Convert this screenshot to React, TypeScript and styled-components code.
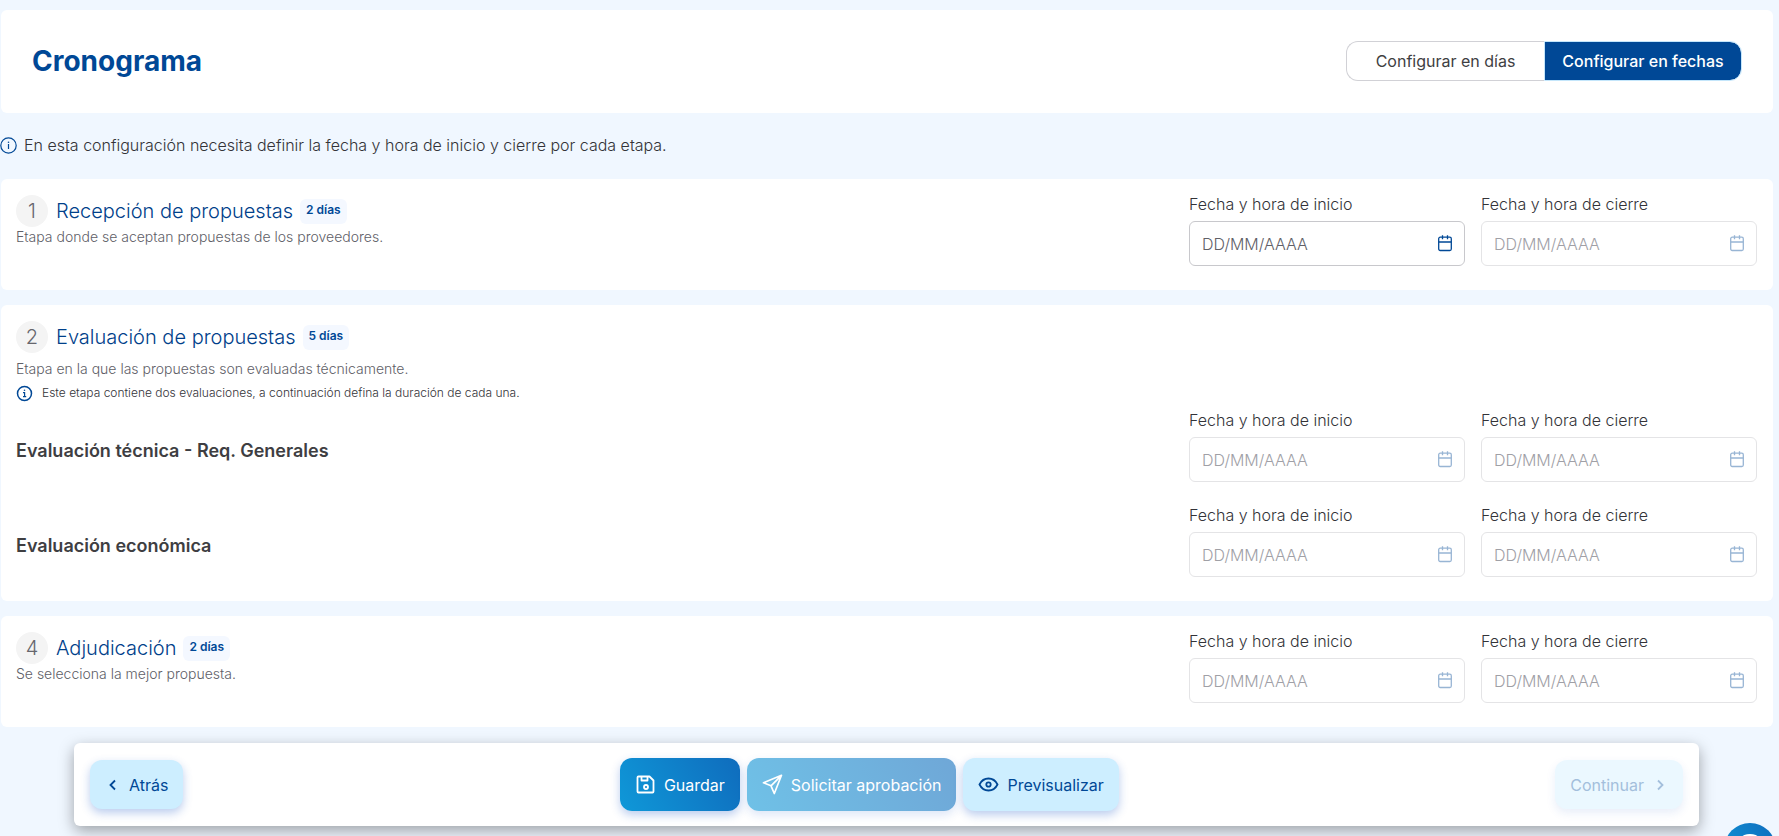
import React, { useId, useState } from 'react';
import styled, { createGlobalStyle, css } from 'styled-components';

const GlobalStyle = createGlobalStyle`
  * { box-sizing: border-box; }
  body {
    margin: 0;
    background: #f0f7ff;
    color: #333338;
    font-family: Inter, 'Liberation Sans', sans-serif;
    font-size: 16px;
    line-height: 24px;
    overflow-x: hidden;
  }
  button, input { font: inherit; }
  h1, h2, h3, p { margin: 0; }
`;

const Page = styled.main`
  height: 100vh;
  overflow: hidden;
  padding: 10px 6px 0 1px;
`;

const Header = styled.header`
  display: flex;
  align-items: center;
  justify-content: space-between;
  padding: 31px 31px 32px;
  background: #fff;
  border-radius: 6px;
`;

const Title = styled.h1`
  color: #004896;
  font-size: 28px;
  line-height: 40px;
  font-weight: 700;
`;

const Toggle = styled.div`
  display: flex;
`;

const ToggleButton = styled.button<{ $active?: boolean }>`
  width: 198px;
  height: 40px;
  padding: 0;
  border: 1px solid ${p => (p.$active ? '#c4e6fb' : '#d1d1d6')};
  background: ${p => (p.$active ? '#004896' : '#fff')};
  background-clip: padding-box;
  color: ${p => (p.$active ? '#fff' : '#3e3e42')};
  font-weight: ${p => (p.$active ? 500 : 400)};
  cursor: pointer;
  &:first-child { border-radius: 12px 0 0 12px; border-right: 0; }
  &:last-child { border-radius: 0 12px 12px 0; }
`;

const Notice = styled.p`
  display: flex;
  align-items: center;
  gap: 7px;
  margin: 20px 0 22px -1px;
  font-weight: 300;
  svg { color: #004896; }
`;

const Card = styled.section`
  display: flex;
  flex-direction: column;
  padding: 16px 16px 16px 15px;
  margin-bottom: 15px;
  background: #fff;
  border-radius: 6px;
`;

const StageRow = styled.div`
  display: flex;
  justify-content: space-between;
  height: 79px;
`;

const StageHead = styled.div`
  display: flex;
  align-items: center;
`;

const StageNumber = styled.span`
  width: 32px;
  height: 32px;
  margin-right: 8px;
  border-radius: 50%;
  background: #f4f4f4;
  color: #66666d;
  font-size: 20px;
  line-height: 32px;
  font-weight: 300;
  text-align: center;
`;

const StageTitle = styled.h2`
  color: #00408a;
  font-size: 20px;
  line-height: 32px;
  font-weight: 300;
`;

const Badge = styled.span`
  margin-left: 7px;
  padding: 0 6px 3px;
  border-radius: 6px;
  background: #f4f8ff;
  color: #004896;
  font-size: 12px;
  line-height: 22px;
  font-weight: 600;
`;

const Description = styled.p<{ $spaced?: boolean }>`
  margin-top: ${p => (p.$spaced ? 6 : 0)}px;
  color: #606067;
  font-size: 14px;
  line-height: 20px;
  font-weight: 300;
`;

const Hint = styled.p`
  display: flex;
  align-items: center;
  gap: 9px;
  margin: 4px 0 8px;
  font-size: 12px;
  line-height: 20px;
  font-weight: 300;
  svg { color: #004896; }
`;

const Evaluation = styled.div`
  display: flex;
  justify-content: space-between;
  align-items: flex-start;
  height: 95px;
  &:last-child { height: 79px; }
`;

const EvaluationTitle = styled.h3`
  margin-top: 28px;
  color: #3e3e42;
  font-size: 18px;
  line-height: 24px;
  font-weight: 600;
`;

const Fields = styled.div`
  display: flex;
  gap: 16px;
`;

const Field = styled.div`
  width: 276px;
`;

const FieldLabel = styled.label`
  display: block;
  margin: -3px 0 5px;
  font-weight: 300;
`;

const InputBox = styled.div<{ $disabled?: boolean }>`
  display: flex;
  align-items: center;
  height: 45px;
  padding: 0 12px;
  border: 1px solid #c8c8cc;
  border-radius: 6px;
  background: #fff;
  ${p => p.$disabled && css`
    border-color: #e4e4e6;
    svg { opacity: 0.4; }
  `}
  svg { color: #004896; flex: none; }
`;

const DateInput = styled.input`
  flex: 1;
  min-width: 0;
  padding: 0;
  border: 0;
  outline: 0;
  background: none;
  color: #3e3e42;
  font-weight: 300;
  &::placeholder { color: #606067; opacity: 1; }
  &:disabled::placeholder { color: #a0a0a6; }
`;

const Footer = styled.footer`
  display: flex;
  align-items: center;
  justify-content: space-between;
  margin: 16px 74px 0 73px;
  padding: 15px 16px;
  background: #fff;
  border-radius: 6px;
  box-shadow: 0 5px 15px rgba(0, 0, 0, 0.35);
`;

const Actions = styled.div`
  display: flex;
  gap: 7px;
`;

const ActionButton = styled.button<{ $kind: 'primary' | 'secondary'; $compact?: boolean }>`
  display: flex;
  align-items: center;
  gap: 8px;
  height: ${p => (p.$compact ? 49 : 53)}px;
  padding: 0 15px;
  border: 0;
  border-radius: 12px;
  font-weight: 400;
  cursor: pointer;
  box-shadow: 0 4px 10px rgba(30, 90, 200, 0.3);
  ${p => p.$kind === 'primary'
    ? css`
        background: linear-gradient(60deg, #0f98d8, #0f6cbd);
        color: #fff;
      `
    : css`
        background: #cdeeff;
        color: #004896;
      `}
  &:disabled { cursor: default; }
`;

const SubmitButton = styled(ActionButton)`
  background: linear-gradient(60deg, #6fc1e7, #6fa7d7);
  box-shadow: 0 4px 10px rgba(30, 90, 200, 0.15);
`;

const NextButton = styled(ActionButton)`
  background: #ebf8ff;
  color: #a3bfdc;
  box-shadow: 0 4px 10px rgba(30, 90, 200, 0.1);
`;

const ChatButton = styled.button`
  position: fixed;
  right: 3px;
  bottom: -39px;
  width: 52px;
  height: 52px;
  padding: 11px;
  border: 0;
  border-radius: 50%;
  background: linear-gradient(60deg, #0f98d8, #0f6cbd);
  color: #fff;
  svg { display: block; }
`;

const InfoIcon = ({ size, bold }: { size: number; bold?: boolean }) => (
  <svg width={size} height={size} viewBox="0 0 17 17" fill="none" stroke="currentColor" aria-hidden="true">
    <circle cx="8.5" cy="8.5" r={bold ? 7 : 7.7} strokeWidth={bold ? 1.5 : 1.2} />
    <path d={bold ? 'M7 7.7h1.600v4M7 11.700h3.200' : 'M8.5 7v5'} strokeWidth="1.2" />
    <circle cx="8.5" cy="5.2" r="0.8" fill="currentColor" stroke="none" />
  </svg>
);

const CalendarIcon = () => (
  <svg width="14" height="17" viewBox="0 0 14 17" fill="none" stroke="currentColor" strokeWidth="1.3" aria-hidden="true">
    <rect x="0.7" y="2.2" width="12.6" height="13.3" rx="1.5" />
    <path d="M0.7 7h12.6M4.5 0.2v4M9.5 0.2v4" />
  </svg>
);

const Chevron = ({ right }: { right?: boolean }) => (
  <svg width="16" height="16" viewBox="0 0 16 16" fill="none" stroke="currentColor" strokeWidth="1.8" aria-hidden="true">
    <path d={right ? 'M6 3.5l4.5 4.5L6 12.5' : 'M10 3.5L5.5 8l4.5 4.5'} />
  </svg>
);

const SaveIcon = () => (
  <svg width="21" height="21" viewBox="0 0 21 21" fill="none" stroke="currentColor" strokeWidth="1.8" strokeLinejoin="round" aria-hidden="true">
    <path d="M2.500 3.500a1 1 0 0 1 1-1h11l4 4v11a1 1 0 0 1-1 1h-14a1 1 0 0 1-1-1zM6.500 2.500v4h6v-4" />
    <circle cx="11" cy="13" r="2" />
  </svg>
);

const SendIcon = () => (
  <svg width="21" height="21" viewBox="0 0 21 21" fill="none" stroke="currentColor" strokeWidth="1.7" strokeLinejoin="round" aria-hidden="true">
    <path d="M19.500 1.300L1.500 8.800l7.500 3 3.300 7.700zM19.500 1.300L9 11.800" />
  </svg>
);

const EyeIcon = () => (
  <svg width="21" height="21" viewBox="0 0 21 21" fill="none" stroke="currentColor" strokeWidth="1.8" aria-hidden="true">
    <path d="M1.500 10.500C3.500 6.500 6.500 4.500 10.500 4.500s7 2 9 6c-2 4-5 6-9 6s-7-2-9-6z" />
    <circle cx="10.5" cy="10.500" r="2.200" />
  </svg>
);

const DateField = ({ label, disabled }: { label: string; disabled?: boolean }) => {
  const id = useId();
  return (
    <Field>
      <FieldLabel htmlFor={id}>{label}</FieldLabel>
      <InputBox $disabled={disabled}>
        <DateInput id={id} placeholder="DD/MM/AAAA" disabled={disabled} />
        <CalendarIcon />
      </InputBox>
    </Field>
  );
};

const DateRange = ({ startEnabled }: { startEnabled?: boolean }) => (
  <Fields>
    <DateField label="Fecha y hora de inicio" disabled={!startEnabled} />
    <DateField label="Fecha y hora de cierre" disabled />
  </Fields>
);

const Heading = ({ number, title, days }: { number: number; title: string; days: number }) => (
  <StageHead>
    <StageNumber>{number}</StageNumber>
    <StageTitle>{title}</StageTitle>
    <Badge>{days} días</Badge>
  </StageHead>
);

export default function App() {
  const [mode, setMode] = useState<'days' | 'dates'>('dates');
  return (
    <>
      <GlobalStyle />
      <Page>
        <Header>
          <Title>Cronograma</Title>
          <Toggle>
            <ToggleButton type="button" $active={mode === 'days'} onClick={() => setMode('days')}>Configurar en días</ToggleButton>
            <ToggleButton type="button" $active={mode === 'dates'} onClick={() => setMode('dates')}>Configurar en fechas</ToggleButton>
          </Toggle>
        </Header>
        <Notice>
          <InfoIcon size={17} />
          En esta configuración necesita definir la fecha y hora de inicio y cierre por cada etapa.
        </Notice>
        <Card>
          <StageRow>
            <div>
              <Heading number={1} title="Recepción de propuestas" days={2} />
              <Description>Etapa donde se aceptan propuestas de los proveedores.</Description>
            </div>
            <DateRange startEnabled />
          </StageRow>
        </Card>
        <Card>
          <Heading number={2} title="Evaluación de propuestas" days={5} />
          <Description $spaced>Etapa en la que las propuestas son evaluadas técnicamente.</Description>
          <Hint>
            <InfoIcon size={17} bold />
            Este etapa contiene dos evaluaciones, a continuación defina la duración de cada una.
          </Hint>
          <Evaluation>
            <EvaluationTitle>Evaluación técnica - Req. Generales</EvaluationTitle>
            <DateRange />
          </Evaluation>
          <Evaluation>
            <EvaluationTitle>Evaluación económica</EvaluationTitle>
            <DateRange />
          </Evaluation>
        </Card>
        <Card>
          <StageRow>
            <div>
              <Heading number={4} title="Adjudicación" days={2} />
              <Description>Se selecciona la mejor propuesta.</Description>
            </div>
            <DateRange />
          </StageRow>
        </Card>
        <Footer>
          <ActionButton type="button" $kind="secondary" $compact><Chevron />Atrás</ActionButton>
          <Actions>
            <ActionButton type="button" $kind="primary"><SaveIcon />Guardar</ActionButton>
            <SubmitButton type="button" $kind="primary" disabled><SendIcon />Solicitar aprobación</SubmitButton>
            <ActionButton type="button" $kind="secondary"><EyeIcon />Previsualizar</ActionButton>
          </Actions>
          <NextButton type="button" $kind="secondary" $compact disabled>Continuar<Chevron right /></NextButton>
        </Footer>
      </Page>
      <ChatButton type="button" aria-label="Chat">
        <svg width="30" height="30" viewBox="0 0 30 30" aria-hidden="true">
          <circle cx="15" cy="15" r="15" fill="currentColor" />
        </svg>
      </ChatButton>
    </>
  );
}
